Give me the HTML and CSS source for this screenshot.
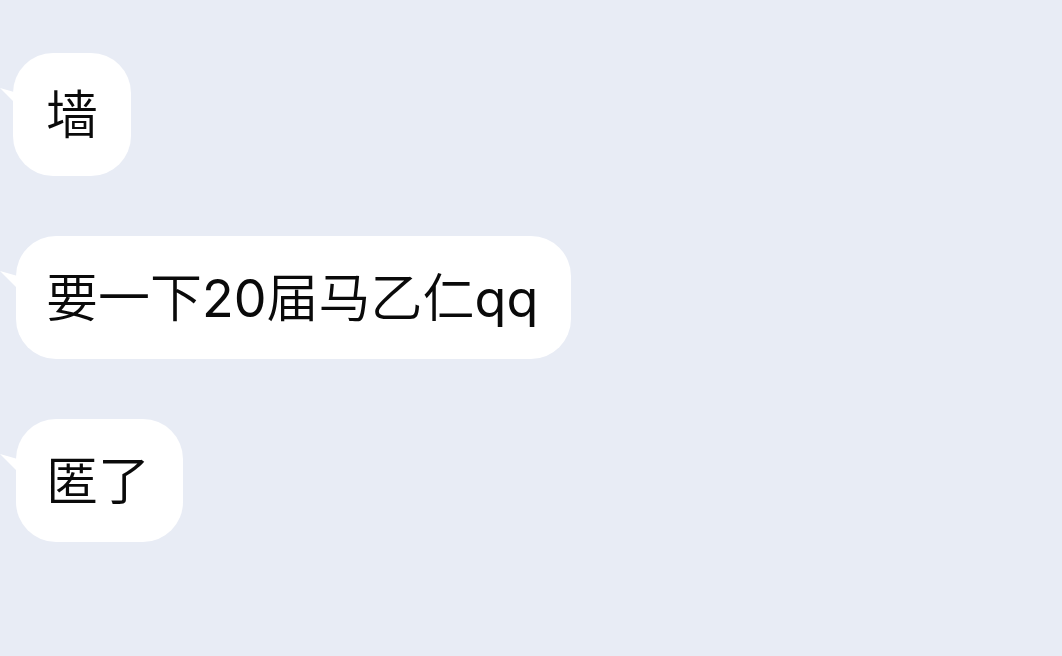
FILE: index.html
```html
<!DOCTYPE html>
<html lang="zh-CN">
<head>
<meta charset="utf-8">
<title>Chat</title>
<link rel="stylesheet" href="styles.css">
</head>
<body>
<main class="chat">
  <div class="row"><div class="bubble b-first">墙</div></div>
  <div class="row"><div class="bubble">要一下<span class="latin">20</span>届马乙仁<span class="latin">qq</span></div></div>
  <div class="row"><div class="bubble">匿了</div></div>
</main>
</body>
</html>
```
FILE: styles.css
```css
html, body {
  margin: 0;
  padding: 0;
  background: #e8ecf5;
  width: 1062px;
  height: 656px;
  overflow: hidden;
}
.chat {
  display: flex;
  flex-direction: column;
  align-items: flex-start;
  gap: 60px;
  padding: 53px 0 0 16px;
  font-family: "Noto Sans CJK SC", "Noto Sans", sans-serif;
  font-weight: 350;
}
.row {
  display: flex;
}
.bubble {
  position: relative;
  box-sizing: border-box;
  background: #ffffff;
  color: #0a0a0a;
  font-size: 52px;
  line-height: 117px;
  height: 123px;
  padding: 0 33px 6px 30px;
  border-radius: 40px;
  white-space: nowrap;
}
.latin {
  font-family: "Inter", "Noto Sans", sans-serif;
  font-weight: 400;
}
.bubble::before {
  content: "";
  position: absolute;
  left: -16px;
  top: 35px;
  width: 22px;
  height: 22px;
  background: #ffffff;
  clip-path: polygon(0 0, 100% 28%, 100% 100%);
}
.b-first {
  margin-left: -3px;
  padding-left: 33px;
}
.b-first::before {
  left: -13px;
}
```
